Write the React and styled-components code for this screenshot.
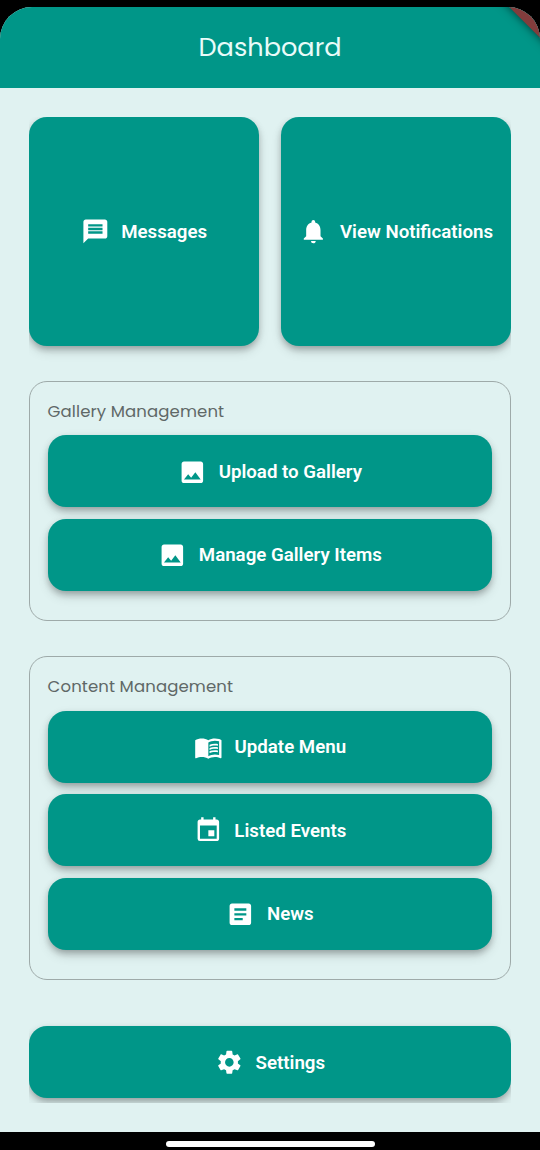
import React from 'react';
import styled, { createGlobalStyle } from 'styled-components';
import {
  MdMessage,
  MdNotifications,
  MdImage,
  MdMenuBook,
  MdEvent,
  MdArticle,
  MdSettings,
} from 'react-icons/md';

const GlobalStyle = createGlobalStyle`
  * { box-sizing: border-box; }
  body { margin: 0; background: #000; }
`;

const Screen = styled.div`
  width: 540px;
  height: 1150px;
  padding-top: 7px;
  background: #000;
  display: flex;
  flex-direction: column;
  overflow: hidden;
`;

const AppView = styled.div`
  position: relative;
  height: 1125.3px;
  flex: none;
  display: flex;
  flex-direction: column;
  border-radius: 32px 32px 0 0;
  overflow: hidden;
  background: #e0f2f1;
`;

const DebugRibbon = styled.div`
  position: absolute;
  top: -12px;
  right: -41px;
  width: 100px;
  height: 28px;
  transform: rotate(45deg);
  background: #823c3c;
  box-shadow: 0 0 10px rgba(0, 0, 0, 0.6);
`;

const Header = styled.header`
  height: 80.6px;
  flex: none;
  display: flex;
  align-items: center;
  justify-content: center;
  background: #009688;
`;

const Title = styled.h1`
  margin: 0;
  font: 400 25.6px/38px Poppins, Inter, sans-serif;
  font-feature-settings: 'cv11';
  color: #e9fbf9;
`;

const Main = styled.main`
  flex: 1;
  min-height: 0;
  padding: 29px;
  display: flex;
`;

const ScrollArea = styled.div`
  flex: 1;
  display: flex;
  flex-direction: column;
  overflow: hidden;
`;

const CardGrid = styled.div`
  flex: none;
  display: grid;
  grid-template-columns: 1fr 1fr;
  gap: 22.6px;
  margin-bottom: 34.9px;
`;

const ActionButton = styled.button`
  width: 100%;
  height: ${(p) => (p.$tall ? '229.4px' : '71.8px')};
  flex: none;
  display: flex;
  align-items: center;
  justify-content: center;
  gap: 12px;
  padding: 1px 0 0;
  border: 0;
  border-radius: 18px;
  background: #009688;
  color: #fff;
  font: 600 18.7px/24px Roboto, sans-serif;
  white-space: nowrap;
  box-shadow:
    0 3.6px 6px -1px rgba(0, 0, 0, 0.24),
    0 6px 11px rgba(0, 0, 0, 0.12),
    0 1px 12px rgba(0, 0, 0, 0.03);

  svg {
    width: 28.7px;
    height: 28.7px;
    flex: none;
  }
`;

const Panel = styled.section`
  flex: none;
  height: ${(p) => p.$height};
  margin-bottom: ${(p) => p.$after};
  padding: 17px 17.6px;
  border: 1.2px solid #9eaaa9;
  border-radius: 18px;
`;

const PanelTitle = styled.h2`
  margin: 0 0 11.6px;
  font: 400 16.5px/25px Poppins, Inter, sans-serif;
  font-feature-settings: 'cv11';
  letter-spacing: 0.12px;
  color: #5f6867;
`;

const ButtonStack = styled.div`
  display: flex;
  flex-direction: column;
  gap: 11.8px;
`;

const NavigationBar = styled.div`
  flex: 1;
  display: flex;
  justify-content: center;
  padding-top: 9px;
`;

const HomeHandle = styled.div`
  width: 209px;
  height: 5.5px;
  border-radius: 3px;
  background: #fff;
`;

function Action({ icon: Icon, label, tall }) {
  return (
    <ActionButton $tall={tall}>
      <Icon />
      <span>{label}</span>
    </ActionButton>
  );
}

export default function App() {
  return (
    <Screen>
      <GlobalStyle />
      <AppView>
        <Header>
          <Title>Dashboard</Title>
        </Header>
        <Main>
          <ScrollArea>
            <CardGrid>
              <Action tall icon={MdMessage} label="Messages" />
              <Action tall icon={MdNotifications} label="View Notifications" />
            </CardGrid>
            <Panel $height="240.2px" $after="35.2px">
              <PanelTitle>Gallery Management</PanelTitle>
              <ButtonStack>
                <Action icon={MdImage} label="Upload to Gallery" />
                <Action icon={MdImage} label="Manage Gallery Items" />
              </ButtonStack>
            </Panel>
            <Panel $height="323.4px" $after="46.6px">
              <PanelTitle>Content Management</PanelTitle>
              <ButtonStack>
                <Action icon={MdMenuBook} label="Update Menu" />
                <Action icon={MdEvent} label="Listed Events" />
                <Action icon={MdArticle} label="News" />
              </ButtonStack>
            </Panel>
            <Action icon={MdSettings} label="Settings" />
          </ScrollArea>
        </Main>
        <DebugRibbon />
      </AppView>
      <NavigationBar>
        <HomeHandle />
      </NavigationBar>
    </Screen>
  );
}
